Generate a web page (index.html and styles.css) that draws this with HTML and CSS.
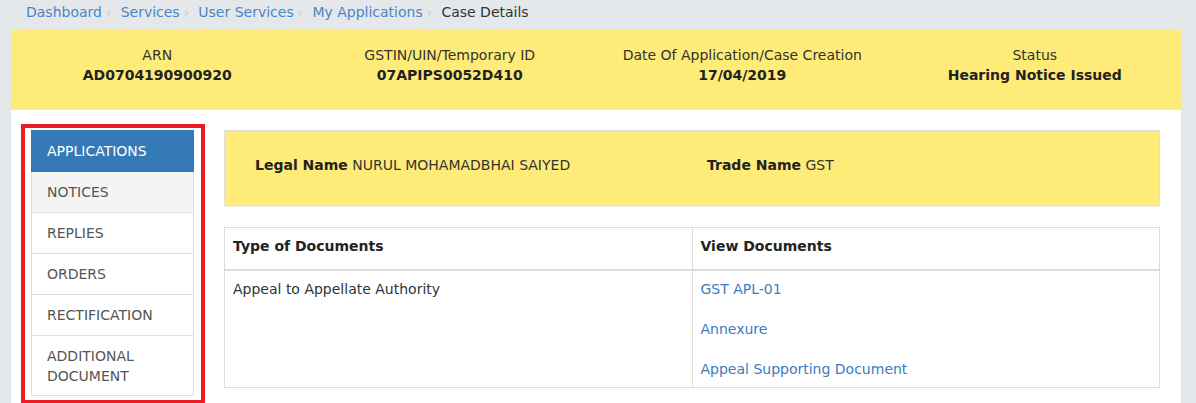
FILE: index.html
```html
<!DOCTYPE html>
<html>
<head>
<meta charset="utf-8">
<link rel="stylesheet" href="styles.css">
</head>
<body>
<nav class="crumbs">
  <a href="#">Dashboard</a><span class="sep">›</span>
  <a href="#">Services</a><span class="sep">›</span>
  <a href="#">User Services</a><span class="sep">›</span>
  <a href="#">My Applications</a><span class="sep">›</span>
  <span class="current">Case Details</span>
</nav>
<div class="page">
  <div class="summary">
    <div class="sum-col"><div class="sum-label">ARN</div><div class="sum-value">AD0704190900920</div></div>
    <div class="sum-col"><div class="sum-label">GSTIN/UIN/Temporary ID</div><div class="sum-value">07APIPS0052D410</div></div>
    <div class="sum-col"><div class="sum-label">Date Of Application/Case Creation</div><div class="sum-value">17/04/2019</div></div>
    <div class="sum-col"><div class="sum-label">Status</div><div class="sum-value">Hearing Notice Issued</div></div>
  </div>
  <div class="content">
    <div class="highlight">
      <ul class="side-nav">
        <li class="active">APPLICATIONS</li>
        <li class="hover">NOTICES</li>
        <li>REPLIES</li>
        <li>ORDERS</li>
        <li>RECTIFICATION</li>
        <li>ADDITIONAL<br>DOCUMENT</li>
      </ul>
    </div>
    <div class="main">
      <div class="names">
        <div class="name-col"><b>Legal Name</b> NURUL MOHAMADBHAI SAIYED</div>
        <div class="name-col"><b>Trade Name</b> GST</div>
      </div>
      <table class="docs">
        <thead>
          <tr><th>Type of Documents</th><th>View Documents</th></tr>
        </thead>
        <tbody>
          <tr>
            <td>Appeal to Appellate Authority</td>
            <td><div class="links"><a href="#">GST APL-01</a><a href="#">Annexure</a><a href="#">Appeal Supporting Document</a></div></td>
          </tr>
        </tbody>
      </table>
    </div>
  </div>
</div>
</body>
</html>
```
FILE: styles.css
```css
html, body {
  margin: 0;
  padding: 0;
}
body {
  background: #e4e8eb;
  font-family: "DejaVu Sans", Verdana, sans-serif;
  font-size: 14px;
  color: #333;
  height: 403px;
  overflow: hidden;
}
a {
  color: #3a7cc1;
  text-decoration: none;
}
.crumbs {
  height: 30px;
  line-height: 24px;
  padding-left: 26px;
  box-sizing: border-box;
}
.crumbs a {
  color: #4a85c4;
}
.crumbs .sep {
  color: #c6cacd;
  font-size: 13px;
  padding: 0 5px 0 4px;
}
.crumbs .current {
  color: #333;
}
.page {
  margin: 0 15px 0 11px;
  background: #fff;
  height: 373px;
}
.summary {
  background: #feeb78;
  height: 80px;
  box-sizing: border-box;
  padding-top: 15px;
  display: grid;
  grid-template-columns: repeat(4, 1fr);
  text-align: center;
  line-height: 20px;
}
.sum-label {
  color: #333;
}
.sum-value {
  font-weight: bold;
  color: #222;
}
.content {
  display: flex;
  padding: 14px 21px 0 10px;
}
.highlight {
  border: 4px solid #ec1c24;
  padding: 2px 7px 1px 6px;
  width: 163px;
  flex: none;
  height: 269px;
  box-sizing: content-box;
}
.side-nav {
  list-style: none;
  margin: 0;
  padding: 0;
  border: 1px solid #ddd;
  border-top: none;
}
.side-nav li {
  padding: 11px 15px 11px 15px;
  line-height: 18px;
  color: #555;
  border-bottom: 1px solid #ddd;
}
.side-nav li:last-child {
  border-bottom: none;
  line-height: 20px;
  padding: 10px 15px 9px;
}
.side-nav li.active {
  background: #337ab7;
  color: #fff;
  border-bottom: none;
  margin: 0 -1px;
  padding: 12px 16px 12px 16px;
}
.side-nav li.hover {
  background: #f4f4f4;
}
.main {
  flex: 1;
  margin-left: 19px;
  padding-top: 6px;
}
.names {
  background: #feeb78;
  border: 1px solid #ddd;
  box-shadow: 0 1px 2px rgba(0,0,0,0.06);
  padding: 24px 15px 30px;
  display: grid;
  grid-template-columns: 1fr 1fr;
  line-height: 20px;
  color: #333;
}
.name-col {
  padding: 0 15px;
}
.name-col b {
  color: #222;
}
.docs {
  margin-top: 21px;
  width: 100%;
  border-collapse: collapse;
  border: 1px solid #ddd;
  table-layout: fixed;
}
.docs th, .docs td {
  text-align: left;
  vertical-align: top;
  line-height: 20px;
  border-left: 1px solid #ddd;
  padding: 8px;
}
.docs th {
  color: #222;
  padding-bottom: 13px;
  border-bottom: 2px solid #ddd;
}
.links {
  display: flex;
  flex-direction: column;
  align-items: flex-start;
  gap: 20px;
}
```
